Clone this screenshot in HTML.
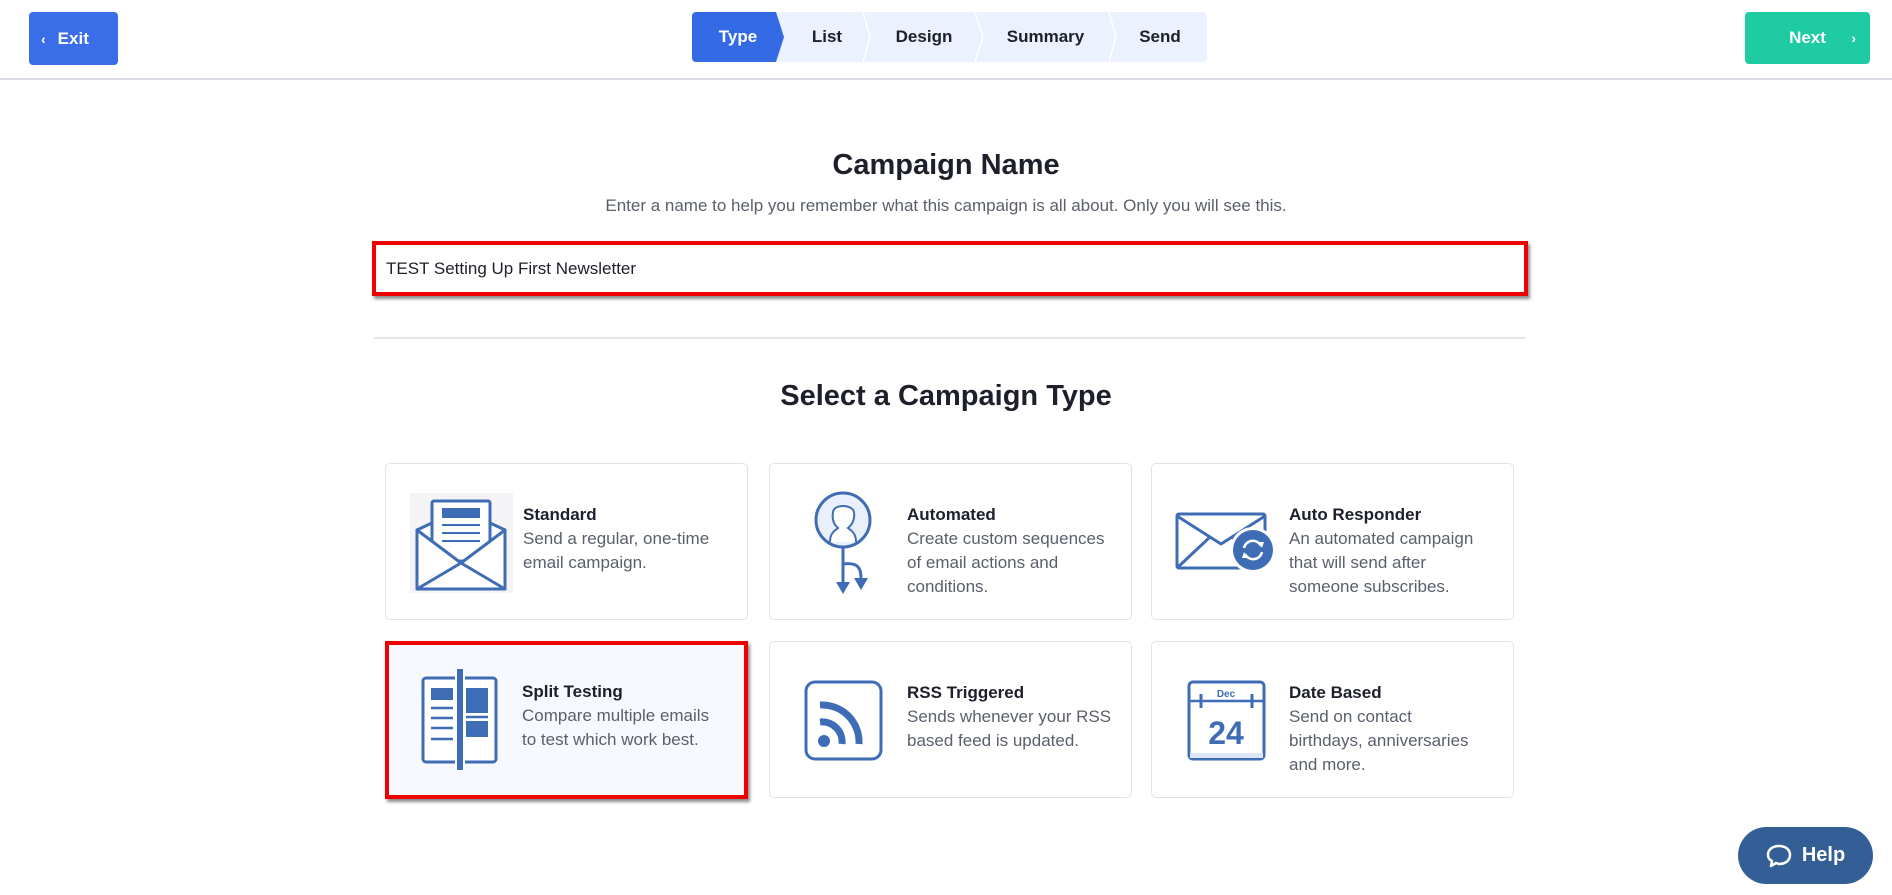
<!DOCTYPE html>
<html><head><meta charset="utf-8"><style>
*{margin:0;padding:0;box-sizing:border-box}
body{width:1892px;height:895px;background:#fff;font-family:"Liberation Sans",sans-serif;position:relative;overflow:hidden;color:#1d1f2a}
.abs{position:absolute}
.btn{position:absolute;border-radius:4px;color:#fff;font-weight:bold;font-size:17px;display:flex;align-items:center}
#exit{left:29px;top:12px;width:89px;height:53px;background:#3a6ee8;padding-left:12px}
#next{left:1745px;top:12px;width:125px;height:52px;background:#1ecba3;justify-content:center}
.hdr{left:0;top:78px;width:1892px;height:2px;background:#d8dbe2}
.steps{left:692px;top:12px;width:515px;height:50px;background:#ebf2fd;border-radius:4px;overflow:hidden}
.step{position:absolute;top:0;height:50px;line-height:50px;font-weight:bold;font-size:17px;text-align:center}
h1{position:absolute;width:1892px;text-align:center;font-size:29px;font-weight:bold;color:#1d1f2a}
.sub{position:absolute;width:1892px;text-align:center;font-size:17px;color:#5a5f6b;top:196px}
.input{left:372px;top:241px;width:1156px;height:55px;border:4px solid #f10000;box-shadow:2px 3px 3px rgba(0,0,0,.45);font-size:17px;line-height:47px;padding-left:10px;color:#1d1f2a}
.div{left:374px;top:337px;width:1151px;height:2px;background:#e3e5ea}
.card{position:absolute;width:363px;height:157px;border:1px solid #e1e3ea;border-radius:5px;background:#fff}
.card svg{position:absolute;left:0;top:0}
.txt{position:absolute;left:137px;top:39px;font-size:17px;line-height:24px;color:#5a5f6b}
.txt b{color:#1d1f2a;display:block}
#help{left:1738px;top:827px;width:135px;height:57px;border-radius:29px;background:#345f96;color:#fff;font-weight:bold;font-size:20px;display:flex;align-items:center;justify-content:center;gap:10px}
</style></head><body>
<div class="btn" id="exit"><span style="font-size:14px;margin-right:12px">‹</span>Exit</div>
<div class="abs steps">
<div class="step" style="left:0;background:#346ae6;color:#fff;clip-path:polygon(0 0,84px 0,92px 25px,84px 50px,0 50px);width:92px">Type</div>
<svg class="abs" style="left:0;top:0" width="515" height="50"><g stroke="#fff" stroke-width="1.5" fill="none"><polyline points="171,0 178,25 171,50"/><polyline points="283,0 291,25 283,50"/><polyline points="417,0 424,25 417,50"/></g></svg>
<div class="step" style="left:92px;width:86px">List</div>
<div class="step" style="left:178px;width:108px">Design</div>
<div class="step" style="left:286px;width:135px">Summary</div>
<div class="step" style="left:421px;width:94px">Send</div>
</div>
<div class="btn" id="next">Next<span style="position:absolute;right:14px;font-size:14px">›</span></div>
<div class="abs hdr"></div>
<h1 style="top:149px">Campaign Name</h1>
<div class="sub">Enter a name to help you remember what this campaign is all about. Only you will see this.</div>
<div class="abs input">TEST Setting Up First Newsletter</div>
<div class="abs div"></div>
<h1 style="top:380px">Select a Campaign Type</h1>

<div class="card" style="left:385px;top:463px">
<svg width="140" height="157"><rect x="24" y="29" width="103" height="100" fill="#f4f4f6"/>
<g stroke="#3f6db5" stroke-width="3" stroke-linejoin="round">
<path d="M31 66 L48 58 L102 58 L119 66 L119 125 L31 125 Z" fill="#fff"/>
<rect x="46" y="37" width="58" height="60" rx="2" fill="#fff"/>
<path d="M31 66 L75 99 L119 66 L119 125 L31 125 Z" fill="#fff"/>
<path d="M31 125 L75 99 L119 125" fill="none"/></g>
<rect x="56" y="44" width="38" height="10" fill="#3f6db5"/><g stroke="#3f6db5" stroke-width="2"><line x1="56" y1="61" x2="94" y2="61"/><line x1="56" y1="69" x2="94" y2="69"/><line x1="56" y1="77" x2="94" y2="77"/></g></svg>
<div class="txt"><b>Standard</b>Send a regular, one-time<br>email campaign.</div></div>

<div class="card" style="left:769px;top:463px">
<svg width="140" height="157"><g stroke="#3f6db5" stroke-width="3" fill="#eaf0fb"><circle cx="73" cy="56" r="27"/></g>
<path d="M60 78 C60 68 66 66 68 64 C63 60 62 54 63 48 C64 40 82 40 84 48 C85 54 83 60 78 64 C80 66 86 68 86 78" fill="#fff" stroke="#3f6db5" stroke-width="2"/>
<g stroke="#3f6db5" stroke-width="3" fill="none"><line x1="73" y1="84" x2="73" y2="120"/><path d="M73 100 C88 98 91 104 91 114"/></g>
<path d="M66 118 L80 118 L73 130 Z M84 114 L98 114 L91 126 Z" fill="#3f6db5"/></svg>
<div class="txt"><b>Automated</b>Create custom sequences<br>of email actions and<br>conditions.</div></div>

<div class="card" style="left:1151px;top:463px">
<svg width="140" height="157"><g stroke="#3f6db5" stroke-width="3" fill="#fff" stroke-linejoin="round"><rect x="25" y="50" width="88" height="54" rx="2"/><path d="M25 52 L69 80 L113 52 M25 104 L58 73 M113 104 L80 73" fill="none"/></g>
<circle cx="101" cy="86" r="23" fill="#fff"/><circle cx="101" cy="86" r="20" fill="#3f6db5"/>
<g stroke="#fff" stroke-width="2.5" fill="none"><path d="M92 84 A9 9 0 0 1 109 82"/><path d="M110 88 A9 9 0 0 1 93 90"/></g><path d="M106 78 L112 78 L110 84 Z M96 94 L90 94 L92 88 Z" fill="#fff"/></svg>
<div class="txt"><b>Auto Responder</b>An automated campaign<br>that will send after<br>someone subscribes.</div></div>

<div class="card" style="left:385px;top:641px;border:4px solid #f10000;box-shadow:2px 3px 3px rgba(0,0,0,.45);background:#f7f9fe;width:363px;height:158px;border-radius:0">
<svg width="140" height="157" style="left:-4px;top:-4px"><g stroke="#3f6db5" stroke-width="3" fill="#fff"><rect x="38" y="37" width="73" height="84" rx="3"/></g>
<rect x="72" y="28" width="6" height="101" fill="#3f6db5"/><rect x="70" y="28" width="2" height="101" fill="#fff"/><rect x="78" y="28" width="2" height="101" fill="#fff"/>
<rect x="46" y="47" width="22" height="12" fill="#3f6db5"/><rect x="81" y="47" width="22" height="25" fill="#3f6db5"/><rect x="81" y="80" width="22" height="16" fill="#3f6db5"/>
<g stroke="#3f6db5" stroke-width="2.5"><line x1="46" y1="67" x2="68" y2="67"/><line x1="46" y1="77" x2="68" y2="77"/><line x1="81" y1="76" x2="103" y2="76"/><line x1="46" y1="87" x2="68" y2="87"/><line x1="46" y1="98" x2="68" y2="98"/></g></svg>
<div class="txt" style="left:133px;top:35px"><b>Split Testing</b>Compare multiple emails<br>to test which work best.</div></div>

<div class="card" style="left:769px;top:641px">
<svg width="140" height="157"><rect x="36" y="40" width="75" height="77" rx="9" fill="#fff" stroke="#3f6db5" stroke-width="3"/>
<circle cx="54" cy="99" r="6" fill="#3f6db5"/><g stroke="#3f6db5" stroke-width="7" fill="none"><path d="M50 80 A20 20 0 0 1 72 102"/><path d="M50 63 A37 37 0 0 1 89 102"/></g></svg>
<div class="txt"><b>RSS Triggered</b>Sends whenever your RSS<br>based feed is updated.</div></div>

<div class="card" style="left:1151px;top:641px">
<svg width="140" height="157"><rect x="37" y="40" width="75" height="77" rx="4" fill="#fff" stroke="#3f6db5" stroke-width="3"/>
<line x1="37" y1="59" x2="112" y2="59" stroke="#3f6db5" stroke-width="2.5"/><rect x="38" y="111" width="73" height="5" fill="#dde6f5"/>
<g stroke="#3f6db5" stroke-width="3"><line x1="49" y1="52" x2="49" y2="66"/><line x1="100" y1="52" x2="100" y2="66"/></g>
<text x="74" y="55" text-anchor="middle" font-family="Liberation Sans" font-weight="bold" font-size="10" fill="#3f6db5">Dec</text>
<text x="74" y="102" text-anchor="middle" font-family="Liberation Sans" font-weight="bold" font-size="32" fill="#3f6db5">24</text></svg>
<div class="txt"><b>Date Based</b>Send on contact<br>birthdays, anniversaries<br>and more.</div></div>

<div class="abs" id="help"><svg width="26" height="24" viewBox="0 0 26 24"><path d="M13 2 C6 2 2 6 2 11 C2 14 4 16 6 17 L5 22 L10 19 C11 19 12 20 13 20 C20 20 24 16 24 11 C24 6 20 2 13 2 Z" fill="none" stroke="#fff" stroke-width="2.5" stroke-linejoin="round"/></svg>Help</div>
</body></html>
